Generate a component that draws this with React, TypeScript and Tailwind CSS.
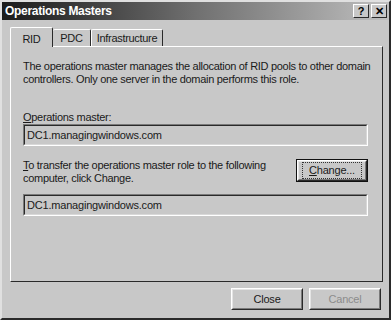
import React from 'react';

const font = { fontFamily: '"Liberation Sans", Arial, sans-serif' };

function Field({ value }: { value: string }) {
  return (
    <div className="h-[22px] w-[345px] border border-t-[#7a7a7a] border-l-[#7a7a7a] border-b-white border-r-white">
      <div className="h-full border border-t-[#2a2a2a] border-l-[#2a2a2a] border-b-[#d8d8d8] border-r-[#d8d8d8] flex items-center pl-[2px] text-[11px] tracking-[-0.2px] text-[#1a1a1a]">
        {value}
      </div>
    </div>
  );
}

function Btn({ label, u, disabled, focus }: { label: string; u?: boolean; disabled?: boolean; focus?: boolean }) {
  return (
    <div className={focus ? 'border border-[#111]' : ''}>
      <div className={`${focus ? 'w-[70px] h-[21px]' : 'w-[72px] h-[22px]'} border border-t-white border-l-white border-b-[#2a2a2a] border-r-[#2a2a2a] bg-[#c8c8c8]`}>
        <div className="h-full border border-t-[#e4e4e4] border-l-[#e4e4e4] border-b-[#7a7a7a] border-r-[#7a7a7a] flex items-center justify-center">
          <span
            className={`text-[11px] tracking-[-0.2px] leading-[13px] ${disabled ? 'text-[#8c8c8c]' : 'text-[#1a1a1a]'} ${
              focus ? 'outline outline-1 outline-dotted outline-[#333] px-[6px] py-[1px]' : ''
            }`}
          >
            {u ? (
              <>
                <span className="underline">C</span>
                {label.slice(1)}
              </>
            ) : (
              label
            )}
          </span>
        </div>
      </div>
    </div>
  );
}

export default function App() {
  return (
    <div
      style={font}
      className="w-[391px] h-[320px] bg-[#c8c8c8] border-2 border-t-[#e0e0e0] border-l-[#e0e0e0] border-b-[#2a2a2a] border-r-[#2a2a2a] flex flex-col overflow-hidden"
    >
      <div className="h-[18px] flex items-center justify-between bg-gradient-to-r from-[#1c1c1c] via-[#707070] to-[#c0c0c0] pl-[3px] pr-[2px]">
        <span className="text-white font-bold text-[12px] tracking-[-0.3px]">Operations Masters</span>
        <div className="flex gap-[2px]">
          <div className="w-[16px] h-[14px] bg-[#c8c8c8] border border-t-white border-l-white border-b-[#2a2a2a] border-r-[#2a2a2a] flex items-center justify-center text-[11px] font-bold text-black leading-none">
            ?
          </div>
          <div className="w-[16px] h-[14px] bg-[#c8c8c8] border border-t-white border-l-white border-b-[#2a2a2a] border-r-[#2a2a2a] flex items-center justify-center text-[11px] font-bold text-black leading-none">
            ✕
          </div>
        </div>
      </div>

      <div className="px-[8px] pt-[7px] flex flex-col text-[11px] tracking-[-0.3px] text-[#1a1a1a]">
        <div className="flex items-end h-[19px] relative z-10">
          <div className="h-[20px] w-[43px] -mb-[1px] border-t border-l border-r border-t-white border-l-white border-r-[#2a2a2a] rounded-t-[2px] bg-[#c8c8c8] flex items-start justify-center pt-[3px]">
            RID
          </div>
          <div className="h-[17px] w-[38px] border-t border-r border-t-white border-r-[#2a2a2a] rounded-t-[2px] flex items-center justify-center">
            PDC
          </div>
          <div className="h-[17px] w-[72px] border-t border-l border-r border-t-white border-l-white border-r-[#2a2a2a] rounded-t-[2px] flex items-center justify-center">
            Infrastructure
          </div>
        </div>
        <div className="h-[236px] w-[373px] border border-t-white border-l-white border-b-[#2a2a2a] border-r-[#2a2a2a] px-[12px] pt-[13px] leading-[13px]">
          <p className="whitespace-nowrap">
            The operations master manages the allocation of RID pools to other domain
            <br />
            controllers. Only one server in the domain performs this role.
          </p>
          <p className="mt-[25px]">
            <span className="underline">O</span>perations master:
          </p>
          <Field value="DC1.managingwindows.com" />
          <div className="mt-[13px] flex justify-between items-start w-[345px]">
            <p className="whitespace-nowrap">
              <span className="underline">T</span>o transfer the operations master role to the following
              <br />
              computer, click Change.
            </p>
            <Btn label="Change..." u focus />
          </div>
          <div className="mt-[9px]">
            <Field value="DC1.managingwindows.com" />
          </div>
        </div>
        <div className="flex justify-end gap-[6px] mt-[6px]">
          <Btn label="Close" />
          <Btn label="Cancel" disabled />
        </div>
      </div>
    </div>
  );
}
